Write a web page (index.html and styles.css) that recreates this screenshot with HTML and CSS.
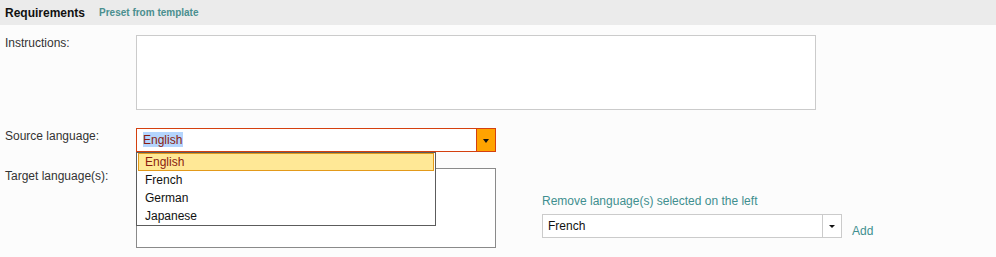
FILE: index.html
```html
<!DOCTYPE html>
<html>
<head>
<meta charset="utf-8">
<link rel="stylesheet" href="styles.css">
</head>
<body>
<div class="header">
  <span class="title">Requirements</span>
  <a class="preset">Preset from template</a>
</div>
<div class="form">
  <div class="row row-instructions">
    <label class="label">Instructions:</label>
    <div class="textarea"></div>
  </div>
  <div class="row row-source">
    <label class="label">Source language:</label>
    <div class="combo">
      <div class="combo-field"><span class="sel">English</span></div>
      <div class="combo-btn"><span class="tri"></span></div>
      <ul class="listbox">
        <li class="opt active">English</li>
        <li class="opt">French</li>
        <li class="opt">German</li>
        <li class="opt">Japanese</li>
      </ul>
    </div>
  </div>
  <div class="row row-target">
    <label class="label">Target language(s):</label>
    <div class="target-box"></div>
    <div class="add-panel">
      <a class="remove">Remove language(s) selected on the left</a>
      <div class="add-line">
        <div class="select2">
          <div class="select2-field">French</div>
          <div class="select2-btn"><span class="tri small"></span></div>
        </div>
        <a class="add">Add</a>
      </div>
    </div>
  </div>
</div>
</body>
</html>
```
FILE: styles.css
```css
html, body {
  margin: 0;
  padding: 0;
  background: #fcfcfc;
  font-family: "Liberation Sans", Arial, sans-serif;
  font-size: 12px;
  line-height: 14px;
  color: #333;
}
.header {
  height: 25px;
  background: #ebebeb;
  display: flex;
  align-items: center;
  padding-left: 5px;
}
.title {
  font-weight: bold;
  font-size: 12px;
  color: #111;
}
.preset {
  margin-left: 14px;
  font-weight: bold;
  font-size: 10px;
  color: #4a8f8f;
  padding-top: 1px;
}
.form {
  padding-left: 5px;
}
.row {
  display: flex;
  align-items: flex-start;
}
.label {
  width: 131px;
  flex: none;
  padding-top: 1px;
  color: #333;
}
.row-instructions {
  margin-top: 10px;
}
.textarea {
  width: 678px;
  height: 73px;
  border: 1px solid #cbcbcb;
  background: #fff;
}
.row-source {
  margin-top: 18px;
}
.combo {
  position: relative;
  width: 358px;
  height: 22px;
  border: 1px solid #d4400f;
  background: #fff;
  display: flex;
}
.combo-field {
  flex: 1;
  padding-left: 6px;
  padding-top: 4px;
}
.sel {
  background: #b4d5fd;
  color: #8a1c10;
  padding: 1px 1px 0 0;
}
.combo-btn {
  width: 18px;
  border-left: 1px solid #d4400f;
  background: #ffa300;
  display: flex;
  align-items: center;
  justify-content: center;
}
.tri {
  width: 0;
  height: 0;
  border-left: 3.5px solid transparent;
  border-right: 3.5px solid transparent;
  border-top: 4px solid #111;
  margin-top: 1px;
}
.tri.small {
  border-left-width: 3px;
  border-right-width: 3px;
  border-top-width: 3px;
}
.listbox {
  position: absolute;
  left: -1px;
  top: 23px;
  width: 296px;
  margin: 0;
  padding: 0 1px;
  list-style: none;
  border: 1px solid #5c5c5c;
  background: #fff;
  z-index: 2;
}
.opt {
  height: 16px;
  line-height: 16px;
  border: 1px solid transparent;
  padding-left: 6px;
  color: #111;
}
.opt.active {
  background: #ffe896;
  border-color: #e39a1a;
  color: #8a1c10;
}
.row-target {
  margin-top: 16px;
}
.target-box {
  width: 358px;
  height: 78px;
  border: 1px solid #8a8a8a;
  background: #fff;
  flex: none;
}
.add-panel {
  margin-left: 46px;
  padding-top: 26px;
  display: flex;
  flex-direction: column;
}
.remove {
  color: #3f8f8f;
}
.add-line {
  margin-top: 6px;
  display: flex;
  align-items: flex-end;
}
.select2 {
  width: 298px;
  height: 22px;
  border: 1px solid #cbcbcb;
  background: #fff;
  display: flex;
}
.select2-field {
  flex: 1;
  padding-left: 5px;
  padding-top: 4px;
  color: #111;
}
.select2-btn {
  width: 18px;
  border-left: 1px solid #cbcbcb;
  display: flex;
  align-items: center;
  justify-content: center;
}
.add {
  margin-left: 10px;
  color: #3f8f8f;
}
```
